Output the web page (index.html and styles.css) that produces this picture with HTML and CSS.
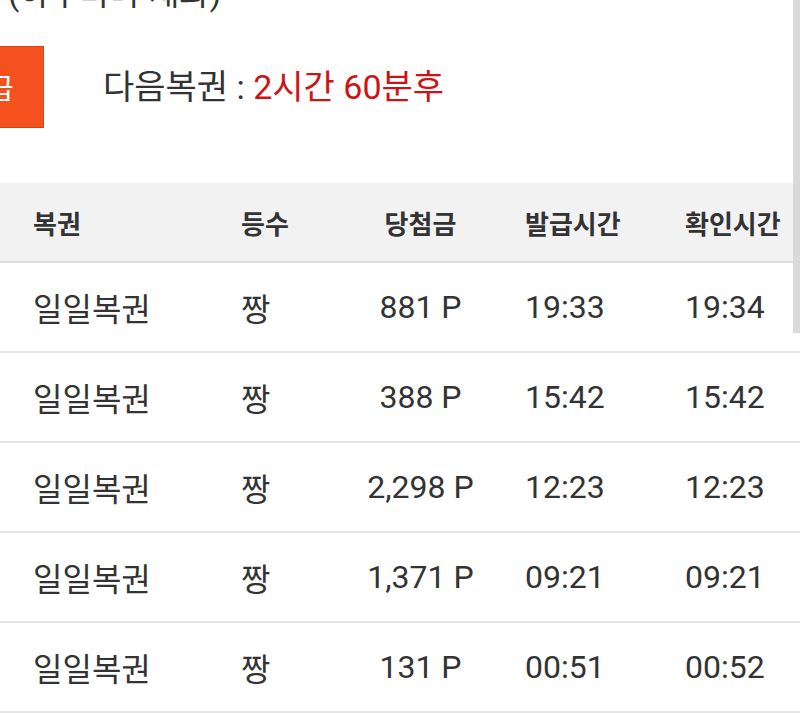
FILE: index.html
```html
<!DOCTYPE html>
<html lang="ko">
<head>
<meta charset="utf-8">
<link rel="stylesheet" href="styles.css">
</head>
<body>
<div class="page">
  <p class="note">(하루마다 재화)</p>
  <div class="next">
    <div class="issue">발급</div>
    <div class="next-text"><span class="label">다음복권 : </span><span class="time">2시간 60분후</span></div>
  </div>
  <div class="table">
    <div class="row head">
      <div class="c c1">복권</div><div class="c c2">등수</div><div class="c c3">당첨금</div><div class="c c4">발급시간</div><div class="c c5">확인시간</div>
    </div>
    <div class="row">
      <div class="c c1">일일복권</div><div class="c c2">짱</div><div class="c c3">881 P</div><div class="c c4">19:33</div><div class="c c5">19:34</div>
    </div>
    <div class="row">
      <div class="c c1">일일복권</div><div class="c c2">짱</div><div class="c c3">388 P</div><div class="c c4">15:42</div><div class="c c5">15:42</div>
    </div>
    <div class="row">
      <div class="c c1">일일복권</div><div class="c c2">짱</div><div class="c c3">2,298 P</div><div class="c c4">12:23</div><div class="c c5">12:23</div>
    </div>
    <div class="row">
      <div class="c c1">일일복권</div><div class="c c2">짱</div><div class="c c3">1,371 P</div><div class="c c4">09:21</div><div class="c c5">09:21</div>
    </div>
    <div class="row">
      <div class="c c1">일일복권</div><div class="c c2">짱</div><div class="c c3">131 P</div><div class="c c4">00:51</div><div class="c c5">00:52</div>
    </div>
  </div>
</div>
<div class="scrollbar"></div>
</body>
</html>
```
FILE: styles.css
```css
html, body {
  margin: 0;
  padding: 0;
  background: #fff;
  overflow: hidden;
}
body {
  font-family: Roboto, "Noto Sans CJK KR", "Noto Sans", sans-serif;
  color: #333;
}
.page {
  width: 800px;
}
.note {
  margin: -26px 0 0 8px;
  font-size: 33px;
  line-height: 40px;
  height: 40px;
  color: #333;
}
.next {
  display: flex;
  align-items: center;
  margin-top: 32px;
  height: 82px;
}
.issue {
  flex: none;
  width: 120px;
  height: 82px;
  margin-left: -76px;
  padding-left: 8px;
  box-sizing: border-box;
  background: #f4511e;
  border: 1px solid #d84315;
  color: #fff;
  font-size: 28px;
  display: flex;
  align-items: center;
  justify-content: center;
}
.next-text {
  margin-left: 59px;
  font-size: 34px;
  line-height: 44px;
}
.label { color: #333; }
.time { color: #cc1414; }
.table {
  margin-top: 55px;
}
.row {
  display: grid;
  grid-template-columns: 241px 110px 139px 160px 150px;
  height: 90px;
  align-items: center;
  border-bottom: 2px solid #e4e4e4;
  box-sizing: border-box;
  font-size: 32px;
}
.row.head {
  height: 80px;
  background: #f2f2f2;
  font-size: 26px;
  font-weight: 700;
  border-bottom: 2px solid #dcdcdc;
}
.c1 { padding-left: 33px; }
.c3 { text-align: center; }
.c4, .c5 { padding-left: 35px; }
.scrollbar {
  position: absolute;
  top: 0;
  right: 0;
  width: 7px;
  height: 333px;
  background: #d9d9d9;
}
```
